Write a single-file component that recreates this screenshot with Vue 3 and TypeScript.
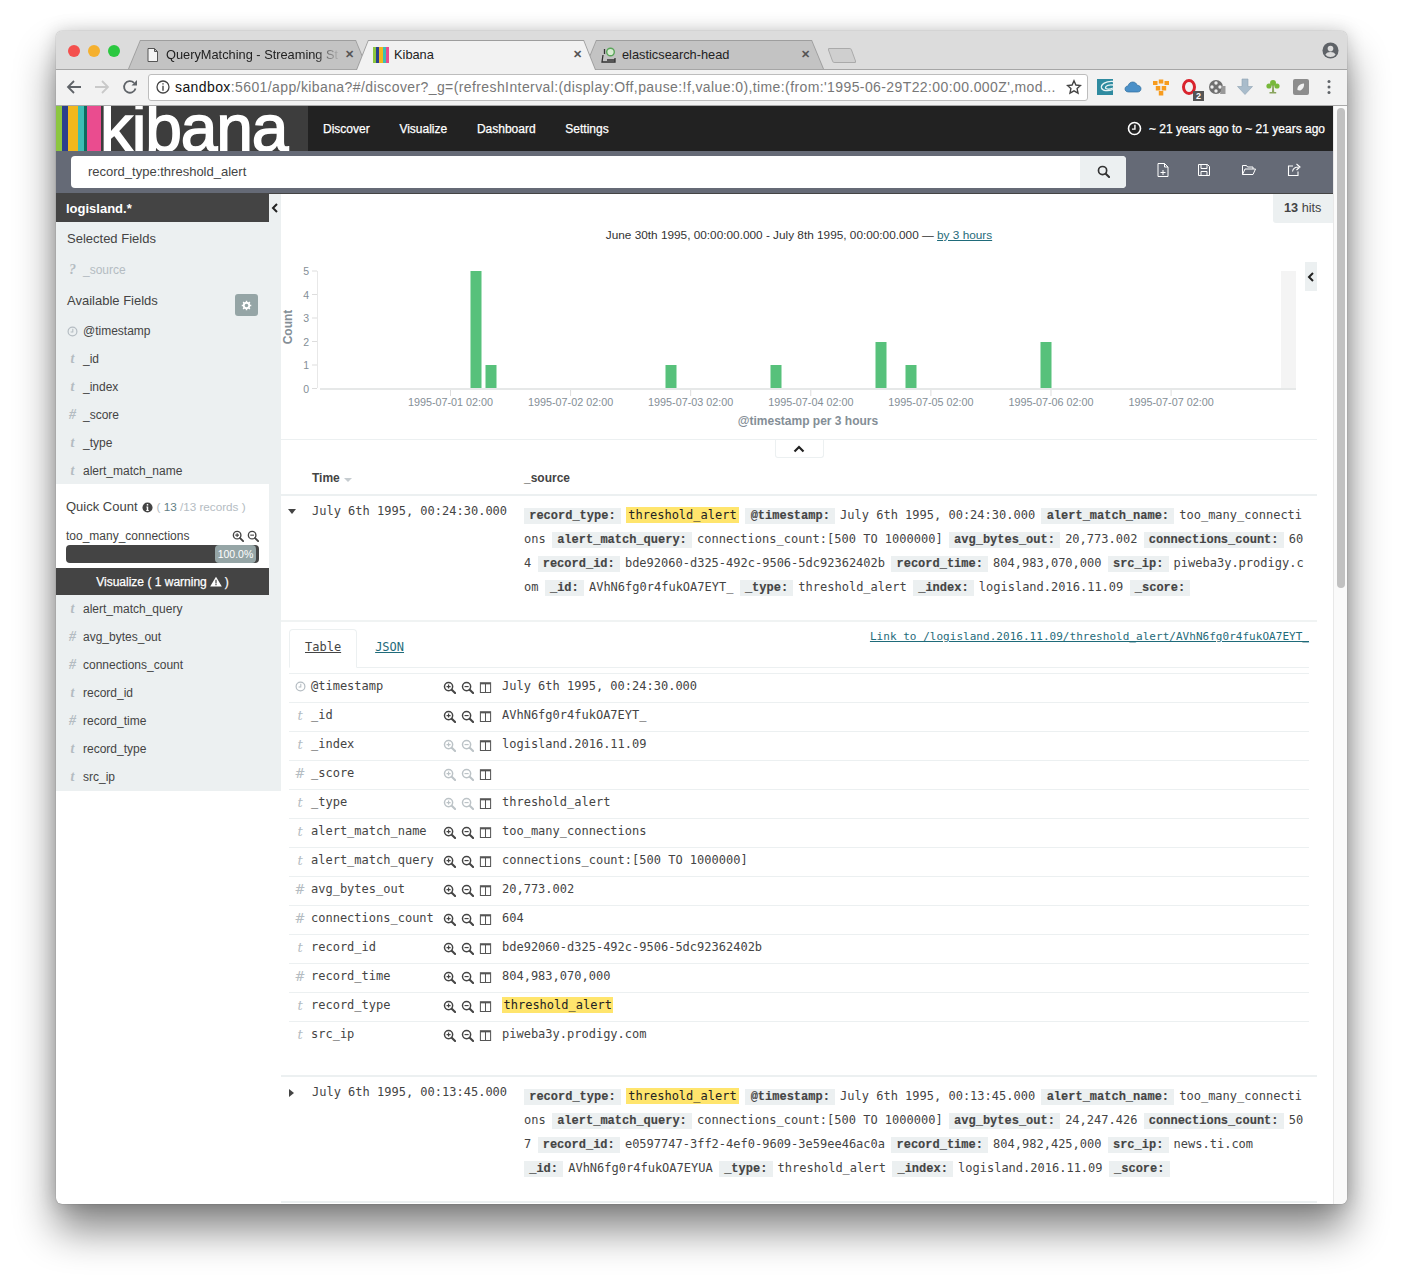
<template>
  <div class="desktop">
    <svg class="sprite" width="0" height="0">
      <symbol id="zoom-in" viewBox="0 0 14 14">
        <circle cx="6" cy="6" r="4.4" fill="none" stroke="currentColor" stroke-width="1.6" />
        <path d="M9.4 9.4 13 13" stroke="currentColor" stroke-width="2.2" stroke-linecap="round" />
        <path d="M3.8 6h4.4M6 3.8v4.4" stroke="currentColor" stroke-width="1.3" />
      </symbol>
      <symbol id="zoom-out" viewBox="0 0 14 14">
        <circle cx="6" cy="6" r="4.4" fill="none" stroke="currentColor" stroke-width="1.6" />
        <path d="M9.4 9.4 13 13" stroke="currentColor" stroke-width="2.2" stroke-linecap="round" />
        <path d="M3.8 6h4.4" stroke="currentColor" stroke-width="1.3" />
      </symbol>
      <symbol id="columns" viewBox="0 0 14 14">
        <path d="M1.5 2h11v10.5h-11zM7 2v10.5" fill="none" stroke="currentColor" stroke-width="1.1" />
        <path d="M1.5 2h11v1.6h-11z" fill="currentColor" />
      </symbol>
      <symbol id="clock" viewBox="0 0 14 14">
        <circle cx="7" cy="7" r="5.6" fill="none" stroke="currentColor" stroke-width="1.5" />
        <path d="M7.4 3.6v4H4.6" fill="none" stroke="currentColor" stroke-width="1.3" />
      </symbol>
    </svg>

    <div class="window">
      <!-- Browser tabs -->
      <div class="tabstrip">
        <div class="lights">
          <span class="light red"></span>
          <span class="light orange"></span>
          <span class="light green"></span>
        </div>
        <div class="tabs">
          <div class="tab">
            <svg class="tab-icon" viewBox="0 0 16 16">
              <path d="M3 1.500h6.500l3 3v10H3zM9.500 1.500v3h3" fill="#f4f4f4" stroke="#555" stroke-width="1" />
            </svg>
            <span class="tab-title fade">QueryMatching - Streaming St</span>
            <span class="tab-x">&#10005;</span>
          </div>
          <div class="tab active">
            <span class="favicon">
              <i v-for="c in faviconStripes" :key="c" :style="{ background: c }"></i>
            </span>
            <span class="tab-title">Kibana</span>
            <span class="tab-x">&#10005;</span>
          </div>
          <div class="tab">
            <svg class="tab-icon" viewBox="0 0 16 16">
              <circle cx="9.500" cy="5" r="3.800" fill="#d8ecd2" stroke="#5aa55a" stroke-width="1.400" />
              <path d="M3.500 2v5M2 8 1 15h13v-4M6 13h8" fill="none" stroke="#333" stroke-width="1.300" />
            </svg>
            <span class="tab-title">elasticsearch-head</span>
            <span class="tab-x">&#10005;</span>
          </div>
          <div class="new-tab"></div>
        </div>
        <svg class="avatar" viewBox="0 0 18 18">
          <circle cx="9" cy="9" r="8.500" fill="#5f6368" />
          <circle cx="9" cy="7" r="3" fill="#dcdcdc" />
          <path d="M3.600 13.600c1-2.300 3.200-3 5.400-3s4.400.7 5.400 3A7 7 0 0 1 9 16a7 7 0 0 1-5.400-2.400z" fill="#dcdcdc" />
        </svg>
      </div>

      <!-- Browser toolbar -->
      <div class="toolbar">
        <svg class="nav-btn" viewBox="0 0 16 16">
          <path d="M15 8H2M8 2 2 8l6 6" fill="none" stroke="#5f6368" stroke-width="1.800" />
        </svg>
        <svg class="nav-btn" viewBox="0 0 16 16">
          <path d="M1 8h13M8 2l6 6-6 6" fill="none" stroke="#c9c9c9" stroke-width="1.800" />
        </svg>
        <svg class="nav-btn" viewBox="0 0 16 16">
          <path d="M13.500 9.500A5.800 5.800 0 1 1 12 3.800" fill="none" stroke="#5f6368" stroke-width="1.800" />
          <path d="M9.500 6.500h5.500V1z" fill="#5f6368" />
        </svg>
        <div class="omnibox">
          <svg class="info" viewBox="0 0 14 14">
            <circle cx="7" cy="7" r="6" fill="none" stroke="#444" stroke-width="1.300" />
            <path d="M6.300 3.200h1.400v1.400H6.300zM6.300 5.800h1.400v5H6.300z" fill="#444" />
          </svg>
          <span class="url"><b>sandbox</b>:5601/app/kibana?#/discover?_g=(refreshInterval:(display:Off,pause:!f,value:0),time:(from:'1995-06-29T22:00:00.000Z',mod...</span>
          <svg class="star" viewBox="0 0 16 16">
            <path d="m8 1.800 1.900 4.200 4.600.5-3.400 3.100.9 4.500L8 11.800l-4 2.300.9-4.500-3.400-3.100 4.600-.5z" fill="none" stroke="#444" stroke-width="1.400" />
          </svg>
        </div>
        <div class="extensions">
          <svg class="ext" viewBox="0 0 18 18">
            <rect x="1" y="1" width="16" height="16" fill="#2f8ba0" />
            <path d="M17 3.500C10 3 4.500 6 5.500 10c1 3 6.500 3.500 11.500 1.500M17 7c-4-.5-7.500.5-7.500 2.500S14 11.500 17 10" fill="none" stroke="#e8f3f5" stroke-width="1.300" />
          </svg>
          <svg class="ext" viewBox="0 0 18 18">
            <path d="M4.500 14C2 14 1 12.300 1 11c0-1.800 1.300-3 3-3 .6-2.500 2.500-4 4.800-4 2.300 0 3.800 1.500 4.400 3.300 2.200 0 3.800 1.500 3.800 3.500 0 2-1.500 3.200-3.500 3.200z" fill="#4a90c8" stroke="#2f6e9e" stroke-width=".7" />
          </svg>
          <svg class="ext" viewBox="0 0 18 18">
            <path d="M1 3h4.500v4H1zM6.800 1.500h4.500v4H6.800zM12.500 3H17v4h-4.500zM3.800 8h4.500v4.500H3.800zM9.700 8h4.500v4.500H9.700zM6.800 13h4.500v4.500H6.800z" fill="#f79c1f" />
          </svg>
          <span class="ext ext-badged">
            <svg class="ext" viewBox="0 0 18 18">
              <path d="M9 2.500C6 2.500 3.500 5.400 3.500 9s2.500 6.500 5.500 6.500S14.500 12.600 14.500 9 12 2.500 9 2.500z" fill="none" stroke="#d9232d" stroke-width="3" />
            </svg>
            <span class="badge">2</span>
          </span>
          <svg class="ext" viewBox="0 0 18 18">
            <circle cx="8" cy="9" r="7" fill="#6f6f6f" />
            <circle cx="8" cy="5" r="1.700" fill="#eee" />
            <circle cx="8" cy="13" r="1.700" fill="#eee" />
            <circle cx="4" cy="9" r="1.700" fill="#eee" />
            <circle cx="12" cy="9" r="1.700" fill="#eee" />
            <path d="M14 8h3.500v8H12z" fill="#999" />
          </svg>
          <svg class="ext" viewBox="0 0 18 18">
            <path d="M6 1h6v7.500h4.500L9 16.500 1.500 8.500H6z" fill="#a9bccb" stroke="#8fa3b3" stroke-width=".6" />
          </svg>
          <svg class="ext" viewBox="0 0 18 18">
            <circle cx="5" cy="8" r="2.600" fill="#77b83a" />
            <circle cx="9" cy="5" r="3" fill="#77b83a" />
            <circle cx="13" cy="8" r="2.600" fill="#77b83a" />
            <path d="M8.200 7h1.600l.4 7h2v1.500H5.500V14h2.500z" fill="#8aa55e" />
          </svg>
          <svg class="ext" viewBox="0 0 18 18">
            <rect x="1" y="1" width="16" height="16" rx="2" fill="#8d8d8d" />
            <path d="M5.500 12c-.5-3 1.500-6 6.500-6.500 .5 3-1.500 6.500-4 7-1 .1-2-.2-2.500-.5z" fill="#f2f2f2" />
          </svg>
          <svg class="ext dots" viewBox="0 0 18 18">
            <circle cx="9" cy="3.500" r="1.500" fill="#5f6368" />
            <circle cx="9" cy="9" r="1.500" fill="#5f6368" />
            <circle cx="9" cy="14.500" r="1.500" fill="#5f6368" />
          </svg>
        </div>
      </div>

      <div class="viewport">
        <div class="app">
          <!-- Kibana nav -->
          <nav class="navbar">
            <div class="logo">
              <span class="stripes">
                <i v-for="s in logoStripes" :key="s.color" :style="{ background: s.color, width: s.width + 'px' }"></i>
              </span>
              <span class="logo-text">kibana</span>
            </div>
            <a v-for="link in navLinks" :key="link" class="nav-link">{{ link }}</a>
            <div class="time-range">
              <svg class="time-icon"><use href="#clock" /></svg>
              ~ 21 years ago to ~ 21 years ago
            </div>
          </nav>

          <!-- Query bar -->
          <div class="querybar">
            <div class="query">
              <span class="query-text">record_type:threshold_alert</span>
              <button class="query-btn">
                <svg viewBox="0 0 14 14"><circle cx="6" cy="6" r="4.400" fill="none" stroke="#333" stroke-width="1.800" /><path d="M9.400 9.400 13 13" stroke="#333" stroke-width="2.200" stroke-linecap="round" /></svg>
              </button>
            </div>
            <div class="query-actions">
              <svg viewBox="0 0 16 16">
                <path d="M3 1.500h6.500l3.500 3.500v9.500H3zM9.500 1.500V5H13M8 8v5M5.500 10.500h5" fill="none" stroke="#fff" stroke-width="1" />
              </svg>
              <svg viewBox="0 0 16 16">
                <path d="M2.500 2.500h9l2 2v9h-11zM5 2.500v4h6v-4M5 13.500V9.500h6v4" fill="none" stroke="#fff" stroke-width="1" />
              </svg>
              <svg viewBox="0 0 16 16">
                <path d="M1.500 12.500v-9h4l1 1.500h5.500v2M1.500 12.500h10.500l2.500-5.500H4z" fill="none" stroke="#fff" stroke-width="1" />
              </svg>
              <svg viewBox="0 0 16 16">
                <path d="M12 9.500v4H2.500V4H7M6.500 9.500c.5-3 3-4.500 6-4.500M10.500 2l3.500 3-3.500 3" fill="none" stroke="#fff" stroke-width="1.100" />
              </svg>
            </div>
          </div>

          <div class="content">
            <!-- Field sidebar -->
            <aside class="sidebar">
              <div class="index-row">
                <div class="index-name">logisland.*</div>
                <div class="collapser">
                  <svg viewBox="0 0 8 10"><path d="M6 1 2 5l4 4" fill="none" stroke="#222" stroke-width="2" /></svg>
                </div>
              </div>

              <div class="panel">
                <div class="section-title">Selected Fields</div>
                <div class="field muted"><span class="type">?</span>_source</div>
                <div class="section-title available">
                  Available Fields
                  <span class="gear">
                    <svg viewBox="0 0 12 12">
                      <circle cx="6" cy="6" r="3" fill="none" stroke="#fff" stroke-width="2" />
                      <path d="M6 .8v2M6 9.200v2M.8 6h2M9.200 6h2M2.300 2.300l1.400 1.400M8.300 8.300l1.400 1.400M2.300 9.700l1.400-1.400M8.300 3.700l1.400-1.400" stroke="#fff" stroke-width="1.500" />
                    </svg>
                  </span>
                </div>
                <div v-for="f in fieldsTop" :key="f.name" class="field">
                  <span class="type">
                    <svg v-if="f.type === 'clock'" class="type-clock"><use href="#clock" /></svg>
                    <template v-else>{{ f.type }}</template>
                  </span>{{ f.name }}
                </div>
              </div>

              <div class="quick-row">
                <div class="quick">
                  <div class="quick-title">
                    <span>Quick Count</span>
                    <svg class="quick-info" viewBox="0 0 12 12">
                      <circle cx="6" cy="6" r="5.500" fill="#444" />
                      <path d="M5.200 2.200h1.600v1.600H5.200zM4.800 5h2v3.800h.6v.9H4.600v-.9h.6V5.900h-.4z" fill="#fff" />
                    </svg>
                    <span class="quick-count">( <em>13</em> /13 records )</span>
                  </div>
                  <div class="quick-head">
                    <span>too_many_connections</span>
                    <span class="quick-zoom">
                      <svg><use href="#zoom-in" /></svg>
                      <svg><use href="#zoom-out" /></svg>
                    </span>
                  </div>
                  <div class="quick-bar"><span>100.0%</span></div>
                </div>
                <div class="gutter"></div>
              </div>

              <div class="visualize-row">
                <div class="visualize">
                  <span>Visualize ( 1 warning</span>
                  <svg viewBox="0 0 14 12"><path d="M7 .5 13.800 11.800H.2z" fill="#fff" /><path d="M6.300 4h1.400v4.200H6.300zM6.300 9h1.400v1.400H6.300z" fill="#444" /></svg>
                  <span>)</span>
                </div>
                <div class="gutter"></div>
              </div>

              <div class="panel bottom">
                <div v-for="f in fieldsBottom" :key="f.name" class="field">
                  <span class="type">{{ f.type }}</span>{{ f.name }}
                </div>
              </div>
            </aside>

            <!-- Results -->
            <main class="results">
              <div class="hits-row">
                <div class="hits"><b>13</b> hits</div>
              </div>
              <div class="chart-title">
                June 30th 1995, 00:00:00.000 - July 8th 1995, 00:00:00.000 &mdash; <a>by 3 hours</a>
              </div>

              <div class="chart">
                <svg class="chart-svg" viewBox="281 255 1036 180">
                  <text class="axis-title" transform="translate(292 327) rotate(-90)" text-anchor="middle">Count</text>
                  <g v-for="t in yTicks" :key="t.label">
                    <text class="tick-label" x="309" :y="t.y + 4" text-anchor="end">{{ t.label }}</text>
                    <path :d="`M312 ${t.y}h5`" stroke="#ddd" />
                  </g>
                  <path d="M317.500 271v117" stroke="#e8e8e8" />
                  <rect x="1281" y="271" width="15" height="118" fill="#f4f4f4" />
                  <rect v-for="b in bars" :key="b.x" class="bar" :x="b.x" :y="389 - b.h" width="11" :height="b.h" />
                  <path d="M320 389h976" stroke="#e6e8e8" stroke-width="2" />
                  <g v-for="t in xTicks" :key="t.label">
                    <path :d="`M${t.x} 390v6`" stroke="#ddd" />
                    <text class="tick-label date" :x="t.x" y="406" text-anchor="middle">{{ t.label }}</text>
                  </g>
                  <text class="axis-title" x="808" y="425" text-anchor="middle">@timestamp per 3 hours</text>
                </svg>
                <div class="chart-toggle">
                  <svg viewBox="0 0 8 10"><path d="M6 1 2 5l4 4" fill="none" stroke="#222" stroke-width="2" /></svg>
                </div>
              </div>

              <div class="divider">
                <div class="divider-btn">
                  <svg viewBox="0 0 12 8"><path d="M1.500 6.500 6 2l4.500 4.500" fill="none" stroke="#222" stroke-width="2.200" /></svg>
                </div>
              </div>

              <div class="table-head">
                <span class="head-time">Time <i class="sort"></i></span>
                <span>_source</span>
              </div>

              <div v-for="(doc, i) in docs" :key="doc.time" class="doc">
                <div class="doc-row">
                  <span class="toggle" :class="{ open: i === 0 }"></span>
                  <span class="doc-time">{{ doc.time }}</span>
                  <dl class="source">
                    <template v-for="p in doc.pairs" :key="p.k">
                      <br v-if="p.newline" />
                      <dt>{{ p.k }}:</dt>
                      <dd><mark v-if="p.hit">{{ p.v }}</mark><template v-else>{{ p.v }}</template></dd>
                    </template>
                  </dl>
                </div>

                <div v-if="i === 0" class="details">
                  <div class="detail-tabs">
                    <a class="detail-tab active">Table</a>
                    <a class="detail-tab">JSON</a>
                    <a class="doc-link">Link to /logisland.2016.11.09/threshold_alert/AVhN6fg0r4fukOA7EYT_</a>
                  </div>
                  <div v-for="r in detailRows" :key="r.name" class="detail-row">
                    <span class="type">
                      <svg v-if="r.type === 'clock'" class="type-clock"><use href="#clock" /></svg>
                      <template v-else>{{ r.type }}</template>
                    </span>
                    <span class="detail-name">{{ r.name }}</span>
                    <span class="detail-actions" :class="{ off: r.off }">
                      <svg class="act"><use href="#zoom-in" /></svg>
                      <svg class="act"><use href="#zoom-out" /></svg>
                      <svg class="act on"><use href="#columns" /></svg>
                    </span>
                    <span class="detail-value"><mark v-if="r.hit">{{ r.value }}</mark><template v-else>{{ r.value }}</template></span>
                  </div>
                </div>
              </div>
            </main>
          </div>
        </div>

        <div class="scrollbar"><div class="thumb"></div></div>
      </div>
    </div>
  </div>
</template>

<script setup lang="ts">
interface Pair {
  k: string
  v: string
  hit?: boolean
  newline?: boolean
}

const faviconStripes = ['#8cc63f', '#2b3f8c', '#f2b81d', '#3dbdb5', '#ea4c8f']

const logoStripes = [
  { color: '#8cc63f', width: 6 },
  { color: '#2b3f8c', width: 6 },
  { color: '#f2b81d', width: 10 },
  { color: '#3dbdb5', width: 6 },
  { color: '#0f6b5f', width: 3 },
  { color: '#ea4c8f', width: 14 }
]

const navLinks = ['Discover', 'Visualize', 'Dashboard', 'Settings']

const fieldsTop = [
  { type: 'clock', name: '@timestamp' },
  { type: 't', name: '_id' },
  { type: 't', name: '_index' },
  { type: '#', name: '_score' },
  { type: 't', name: '_type' },
  { type: 't', name: 'alert_match_name' }
]

const fieldsBottom = [
  { type: 't', name: 'alert_match_query' },
  { type: '#', name: 'avg_bytes_out' },
  { type: '#', name: 'connections_count' },
  { type: 't', name: 'record_id' },
  { type: '#', name: 'record_time' },
  { type: 't', name: 'record_type' },
  { type: 't', name: 'src_ip' }
]

const yTicks = [5, 4, 3, 2, 1, 0].map((n) => ({ label: String(n), y: 271 + (5 - n) * 23.5 }))

const bars = [
  { x: 470.5, h: 118 },
  { x: 485.5, h: 24 },
  { x: 665.5, h: 24 },
  { x: 770.5, h: 24 },
  { x: 875.5, h: 47 },
  { x: 905.5, h: 24 },
  { x: 1040.5, h: 47 }
]

const xTicks = ['01', '02', '03', '04', '05', '06', '07'].map((d, i) => ({
  label: `1995-07-${d} 02:00`,
  x: 450.5 + i * 120.1
}))

const docs: { time: string; pairs: Pair[] }[] = [
  {
    time: 'July 6th 1995, 00:24:30.000',
    pairs: [
      { k: 'record_type', v: 'threshold_alert', hit: true },
      { k: '@timestamp', v: 'July 6th 1995, 00:24:30.000' },
      { k: 'alert_match_name', v: 'too_many_connections' },
      { k: 'alert_match_query', v: 'connections_count:[500 TO 1000000]' },
      { k: 'avg_bytes_out', v: '20,773.002' },
      { k: 'connections_count', v: '604' },
      { k: 'record_id', v: 'bde92060-d325-492c-9506-5dc92362402b' },
      { k: 'record_time', v: '804,983,070,000' },
      { k: 'src_ip', v: 'piweba3y.prodigy.com' },
      { k: '_id', v: 'AVhN6fg0r4fukOA7EYT_' },
      { k: '_type', v: 'threshold_alert' },
      { k: '_index', v: 'logisland.2016.11.09' },
      { k: '_score', v: '' }
    ]
  },
  {
    time: 'July 6th 1995, 00:13:45.000',
    pairs: [
      { k: 'record_type', v: 'threshold_alert', hit: true },
      { k: '@timestamp', v: 'July 6th 1995, 00:13:45.000' },
      { k: 'alert_match_name', v: 'too_many_connections' },
      { k: 'alert_match_query', v: 'connections_count:[500 TO 1000000]' },
      { k: 'avg_bytes_out', v: '24,247.426' },
      { k: 'connections_count', v: '507' },
      { k: 'record_id', v: 'e0597747-3ff2-4ef0-9609-3e59ee46ac0a' },
      { k: 'record_time', v: '804,982,425,000' },
      { k: 'src_ip', v: 'news.ti.com' },
      { k: '_id', v: 'AVhN6fg0r4fukOA7EYUA', newline: true },
      { k: '_type', v: 'threshold_alert' },
      { k: '_index', v: 'logisland.2016.11.09' },
      { k: '_score', v: '' }
    ]
  }
]

const detailRows = [
  { type: 'clock', name: '@timestamp', value: 'July 6th 1995, 00:24:30.000' },
  { type: 't', name: '_id', value: 'AVhN6fg0r4fukOA7EYT_' },
  { type: 't', name: '_index', value: 'logisland.2016.11.09', off: true },
  { type: '#', name: '_score', value: '', off: true },
  { type: 't', name: '_type', value: 'threshold_alert', off: true },
  { type: 't', name: 'alert_match_name', value: 'too_many_connections' },
  { type: 't', name: 'alert_match_query', value: 'connections_count:[500 TO 1000000]' },
  { type: '#', name: 'avg_bytes_out', value: '20,773.002' },
  { type: '#', name: 'connections_count', value: '604' },
  { type: 't', name: 'record_id', value: 'bde92060-d325-492c-9506-5dc92362402b' },
  { type: '#', name: 'record_time', value: '804,983,070,000' },
  { type: 't', name: 'record_type', value: 'threshold_alert', hit: true },
  { type: 't', name: 'src_ip', value: 'piweba3y.prodigy.com' }
]
</script>

<style>
html,
body {
  margin: 0;
  background: #fff;
}
</style>

<style scoped>
.sprite {
  position: absolute;
}

.desktop {
  box-sizing: border-box;
  width: 1403px;
  height: 1284px;
  padding: 31px 56px 0;
  overflow: hidden;
  font-family: 'Liberation Sans', Arial, sans-serif;
  color: #444;
}

.window {
  display: flex;
  flex-direction: column;
  width: 1291px;
  height: 1173px;
  border-radius: 6px;
  overflow: hidden;
  background: #fff;
  box-shadow: 0 26px 40px rgba(0, 0, 0, 0.48), 0 0 18px rgba(0, 0, 0, 0.18), 0 0 1px rgba(0, 0, 0, 0.5);
}

/* Browser chrome */
.tabstrip {
  position: relative;
  display: flex;
  flex: none;
  height: 38px;
  background: #dcdcdc;
  border-bottom: 1px solid #a6a6a6;
  margin-bottom: -1px;
}

.lights {
  display: flex;
  gap: 8px;
  padding: 14px 0 0 12px;
  width: 60px;
}

.light {
  width: 12px;
  height: 12px;
  border-radius: 50%;
}

.red { background: #f4504e; }
.orange { background: #f5b02e; }
.green { background: #2bc840; }

.tabs {
  display: flex;
  align-items: flex-end;
  height: 38px;
}

.tab {
  position: relative;
  display: flex;
  align-items: center;
  box-sizing: border-box;
  width: 240px;
  height: 29px;
  margin-right: -12px;
  padding: 0 14px 0 17px;
  font-size: 12.800px;
  color: #222;
  background: #9e9e9e;
  clip-path: polygon(0 100%, 12px 0, calc(100% - 12px) 0, 100% 100%);
}

.tab::before {
  content: '';
  position: absolute;
  inset: 1px 0 0;
  background: #c3c3c3;
  clip-path: polygon(1px 100%, 12.500px 0, calc(100% - 12.500px) 0, calc(100% - 1px) 100%);
}

.tab > * {
  position: relative;
}

.tab.active {
  z-index: 2;
  height: 30px;
  margin-bottom: -1px;
  padding-bottom: 1px;
}

.tab.active::before {
  background: #f2f2f2;
}

.tab-icon {
  flex: none;
  width: 16px;
  height: 16px;
}

.favicon {
  display: flex;
  flex: none;
  width: 16px;
  height: 16px;
}

.favicon i {
  flex: 1;
}

.tab-title {
  flex: 1;
  margin-left: 5px;
  white-space: nowrap;
  overflow: hidden;
}

.fade {
  -webkit-mask-image: linear-gradient(to right, #000 85%, transparent);
  mask-image: linear-gradient(to right, #000 85%, transparent);
}

.tab-x {
  flex: none;
  margin-left: 4px;
  font-size: 11px;
  font-weight: bold;
  color: #555;
}

.new-tab {
  width: 24px;
  height: 15px;
  margin: 0 0 6px 18px;
  background: #cfcfcf;
  border: 1px solid #aaa;
  box-sizing: border-box;
  transform: skewX(20deg);
  border-radius: 2px;
}

.avatar {
  position: absolute;
  top: 11px;
  right: 8px;
  width: 17px;
  height: 17px;
}

.toolbar {
  display: flex;
  flex: none;
  align-items: center;
  box-sizing: border-box;
  height: 37px;
  padding: 0 0 0 10px;
  background: #f2f2f2;
  border-bottom: 1px solid #a9a9a9;
}

.nav-btn {
  flex: none;
  width: 16px;
  height: 16px;
  margin-right: 12px;
}

.nav-btn:nth-child(3) {
  margin-right: 10px;
}

.omnibox {
  display: flex;
  flex: none;
  align-items: center;
  box-sizing: border-box;
  width: 940px;
  height: 27px;
  padding: 0 5px 0 7px;
  background: #fff;
  border: 1px solid #bdbdbd;
  border-radius: 3px;
}

.info {
  flex: none;
  width: 14px;
  height: 14px;
  margin-right: 5px;
}

.url {
  flex: 1;
  font-size: 14px;
  letter-spacing: 0.4px;
  color: #777;
  white-space: nowrap;
  overflow: hidden;
}

.url b {
  font-weight: normal;
  color: #111;
}

.star {
  flex: none;
  width: 16px;
  height: 16px;
  margin-left: 8px;
}

.extensions {
  display: flex;
  align-items: center;
  gap: 10px;
  margin-left: 8px;
}

.ext {
  display: block;
  flex: none;
  width: 18px;
  height: 18px;
}

.ext-badged {
  position: relative;
}

.badge {
  position: absolute;
  right: -6px;
  bottom: -5px;
  padding: 0 3px;
  font-size: 9px;
  font-weight: bold;
  line-height: 10px;
  color: #fff;
  background: #555;
}

/* Page */
.viewport {
  display: flex;
  flex: 1;
  min-height: 0;
}

.app {
  flex: 1;
  min-width: 0;
  overflow: hidden;
}

.scrollbar {
  flex: none;
  box-sizing: border-box;
  width: 14px;
  padding: 2px 3px;
  background: #fafafa;
  border-left: 1px solid #e8e8e8;
}

.thumb {
  width: 8px;
  height: 480px;
  background: #c1c1c1;
  border-radius: 4px;
}

.navbar {
  display: flex;
  align-items: center;
  height: 45px;
  background: #222;
  font-size: 12px;
  color: #fff;
}

.logo {
  display: flex;
  width: 252px;
  height: 45px;
  margin-right: 15px;
  overflow: hidden;
  background: #3d3d3d;
}

.stripes {
  display: flex;
  flex: none;
}

.stripes i {
  display: block;
}

.logo-text {
  margin-left: -1px;
  font-size: 66px;
  line-height: 45px;
  letter-spacing: -1.200px;
  color: #fff;
  -webkit-text-stroke: 1.500px #fff;
}

.nav-link {
  margin-right: 29.700px;
  -webkit-text-stroke: 0.25px #fff;
}

.time-range {
  display: flex;
  align-items: center;
  margin-left: auto;
  padding-right: 8px;
  -webkit-text-stroke: 0.25px #fff;
}

.time-icon {
  width: 15px;
  height: 15px;
  margin-right: 7px;
}

.querybar {
  display: flex;
  box-sizing: border-box;
  height: 43px;
  padding: 5px 0 0 15px;
  background: #656a76;
  border-bottom: 1px solid #444;
}

.query {
  display: flex;
  width: 1055px;
  height: 32px;
  overflow: hidden;
  background: #fff;
  border-radius: 4px;
}

.query-text {
  flex: 1;
  padding-left: 17px;
  font-size: 13px;
  line-height: 31px;
  color: #444;
}

.query-btn {
  display: flex;
  align-items: center;
  justify-content: center;
  width: 46px;
  padding: 0 0 1px;
  background: #ecf0f1;
  border: 0;
}

.query-btn svg {
  display: block;
  width: 13px;
  height: 13px;
}

.query-actions {
  display: flex;
  gap: 29px;
  padding: 6px 0 0 29px;
}

.query-actions svg {
  display: block;
  width: 16px;
  height: 16px;
}

.query-actions svg:first-child {
  margin-right: -4px;
}

.content {
  display: flex;
}

/* Sidebar */
.sidebar {
  flex: none;
  width: 225px;
  font-size: 12px;
}

.index-row,
.quick-row,
.visualize-row {
  display: flex;
  background: #ecf0f1;
}

.index-name {
  width: 213px;
  height: 28px;
  box-sizing: border-box;
  padding: 1px 0 0 10px;
  font-size: 13px;
  font-weight: bold;
  line-height: 28px;
  color: #fff;
  background: #444;
}

.collapser {
  display: flex;
  flex: 1;
  align-items: center;
  justify-content: center;
}

.collapser svg {
  width: 8px;
  height: 10px;
}

.panel {
  box-sizing: border-box;
  height: 262px;
  padding-top: 4px;
  background: #ecf0f1;
}

.panel.bottom {
  height: 196px;
  padding-top: 0;
}

.section-title {
  padding-left: 11px;
  font-size: 13px;
  line-height: 26px;
  color: #444;
}

.section-title.available {
  display: flex;
  align-items: flex-start;
  justify-content: space-between;
  height: 30px;
  padding-right: 23px;
  line-height: 27px;
}

.gear {
  display: flex;
  align-items: center;
  justify-content: center;
  width: 23px;
  height: 22px;
  margin-top: 7px;
  background: #95a5a6;
  border-radius: 3px;
}

.gear svg {
  width: 11px;
  height: 11px;
}

.field {
  display: flex;
  align-items: center;
  height: 28px;
  line-height: 28px;
  color: #444;
}

.field.muted {
  height: 34px;
  margin-top: 1px;
  color: #b4bcc2;
}

.type {
  display: flex;
  flex: none;
  align-items: center;
  justify-content: center;
  font-family: 'Liberation Serif', serif;
  font-size: 14px;
  font-style: italic;
  font-weight: bold;
  color: #b4bcc2;
}

.field .type {
  box-sizing: border-box;
  width: 27px;
  padding-left: 6px;
}

.type-clock {
  width: 11px;
  height: 11px;
}

.quick {
  box-sizing: border-box;
  width: 213px;
  height: 84px;
  padding: 12px 10px 0;
  background: #fff;
}

.gutter {
  flex: 1;
}

.quick-title {
  display: flex;
  align-items: center;
  font-size: 13px;
  line-height: 22px;
  color: #444;
}

.quick-info {
  width: 11px;
  height: 11px;
  margin: 0 4px;
}

.quick-count {
  font-size: 11.700px;
  color: #b4bcc2;
}

.quick-count em {
  font-style: normal;
  color: #5f7e85;
}

.quick-head {
  display: flex;
  align-items: center;
  justify-content: space-between;
  margin-top: 11px;
  line-height: 14px;
  color: #444;
}

.quick-zoom {
  display: flex;
  gap: 3px;
}

.quick-zoom svg {
  width: 12px;
  height: 12px;
}

.quick-bar {
  display: flex;
  justify-content: flex-end;
  height: 18px;
  margin-top: 2px;
  padding-right: 3px;
  box-sizing: border-box;
  background: #444;
  border-radius: 4px;
}

.quick-bar span {
  width: 41px;
  font-size: 10.500px;
  line-height: 18px;
  text-align: center;
  color: #fff;
  background: #95a5a6;
  border-radius: 4px;
}

.visualize {
  display: flex;
  align-items: center;
  justify-content: center;
  width: 213px;
  height: 27px;
  font-size: 12px;
  color: #fff;
  background: #444;
  -webkit-text-stroke: 0.25px #fff;
}

.visualize svg {
  width: 12px;
  height: 11px;
  margin: 0 3px;
}

/* Main area */
.results {
  box-sizing: border-box;
  flex: 1;
  min-width: 0;
  padding-right: 16px;
}

.hits-row {
  display: flex;
  justify-content: flex-end;
  height: 29px;
}

.hits {
  box-sizing: border-box;
  width: 60px;
  margin-right: -16px;
  padding-left: 11px;
  font-size: 12.700px;
  line-height: 29px;
  background: #ecf0f1;
  border-radius: 0 0 0 3px;
}

.chart-title {
  height: 32px;
  font-size: 11.800px;
  line-height: 24px;
  text-align: center;
  color: #333;
}

.chart-title a {
  color: #1f6b7a;
  text-decoration: underline;
}

.chart {
  position: relative;
  height: 184px;
}

.chart-svg {
  display: block;
  width: 1036px;
  height: 180px;
}

.tick-label {
  font-size: 10.500px;
  fill: #848e96;
}

.tick-label.date {
  font-size: 10.800px;
}

.axis-title {
  font-size: 12px;
  font-weight: bold;
  fill: #848e96;
}

.bar {
  fill: #57c17b;
}

.chart-toggle {
  position: absolute;
  top: 7px;
  right: 0;
  display: flex;
  align-items: center;
  justify-content: center;
  width: 12px;
  height: 29px;
  background: #ecf0f1;
}

.chart-toggle svg {
  width: 8px;
  height: 10px;
}

.divider {
  display: flex;
  justify-content: center;
  height: 18px;
  border-top: 1px solid #ecf0f1;
  box-sizing: border-box;
}

.divider-btn {
  display: flex;
  align-items: center;
  justify-content: center;
  box-sizing: border-box;
  width: 49px;
  height: 18px;
  background: #fff;
  border: 1px solid #ecf0f1;
  border-top: 0;
  border-radius: 0 0 3px 3px;
}

.divider-btn svg {
  width: 12px;
  height: 8px;
}

.table-head {
  display: flex;
  box-sizing: border-box;
  height: 39px;
  padding: 14px 0 0 31px;
  font-size: 12px;
  font-weight: bold;
  line-height: 14px;
  color: #444;
  border-bottom: 2px solid #ecf0f1;
}

.head-time {
  width: 212px;
}

.sort {
  display: inline-block;
  margin-left: 1px;
  border: 4px solid transparent;
  border-top-color: #c6ccd0;
  border-bottom: 0;
}

.doc {
  border-bottom: 2px solid #ecf0f1;
}

.doc-row {
  display: flex;
  align-items: flex-start;
  box-sizing: border-box;
  min-height: 124px;
  padding: 7px 11px 0 0;
  font-family: 'DejaVu Sans Mono', monospace;
  font-size: 12px;
  line-height: 24px;
  color: #444;
}

.toggle {
  flex: none;
  width: 0;
  height: 0;
  margin: 5px 18px 0 8px;
  border: 4px solid transparent;
  border-left: 5px solid #444;
  border-right: 0;
}

.toggle.open {
  margin: 6px 16px 0 7px;
  border: 4px solid transparent;
  border-top: 5px solid #444;
  border-bottom: 0;
}

.doc-time {
  flex: none;
  width: 212px;
  margin-top: 1px;
  line-height: 14px;
}

.source {
  flex: 1;
  min-width: 0;
  margin: 0;
  word-break: break-all;
}

.source dt {
  display: inline;
  padding: 1px 5.200px;
  margin-right: 5px;
  font-family: 'Liberation Mono', monospace;
  font-weight: bold;
  line-height: 14px;
  background: #ecf0f1;
  -webkit-text-stroke: 0.15px #444;
}

.source dd {
  display: inline;
  margin: 0 6.300px 0 0;
}

mark {
  padding: 1px 2.500px;
  color: #222;
  background: #ffe56d;
}

.details {
  box-sizing: border-box;
  height: 455px;
  padding: 7px 8px 0;
  font-family: 'DejaVu Sans Mono', monospace;
  font-size: 12px;
  border-top: 2px solid #f0f3f3;
}

.detail-tabs {
  display: flex;
  box-sizing: border-box;
  height: 39px;
  margin-bottom: 5px;
  border-bottom: 1px solid #ecf0f1;
}

.detail-tab {
  box-sizing: border-box;
  height: 39px;
  padding: 0 15px;
  line-height: 35px;
  text-decoration: underline;
  color: #1f6b7a;
  border: 1px solid transparent;
}

.detail-tab:nth-child(2) {
  margin-left: 2px;
}

.detail-tab.active {
  color: #444;
  background: #fff;
  border-color: #ecf0f1;
  border-bottom-color: #fff;
  border-radius: 4px 4px 0 0;
}

.doc-link {
  margin: 1px 0 0 auto;
  font-size: 11px;
  letter-spacing: 0.03px;
  line-height: 14px;
  text-decoration: underline;
  color: #1f6b7a;
}

.detail-row {
  display: flex;
  align-items: center;
  box-sizing: border-box;
  height: 29px;
  padding-bottom: 4px;
  border-top: 1px solid #ecf0f1;
  color: #444;
}

.detail-row .type {
  width: 22px;
  font-family: 'DejaVu Serif', serif;
  font-size: 13px;
  font-weight: normal;
}

.detail-name {
  flex: none;
  width: 133px;
}

.detail-actions {
  display: flex;
  flex: none;
  gap: 5px;
  width: 58px;
  margin-left: -1px;
  margin-right: 1px;
  padding-top: 2px;
  color: #444;
}

.detail-actions.off .act {
  color: #bcc3c7;
}

.detail-actions .act.on {
  color: #555;
}

.act {
  width: 13px;
  height: 13px;
}

.detail-value mark {
  padding: 1px 1.500px;
}
</style>
